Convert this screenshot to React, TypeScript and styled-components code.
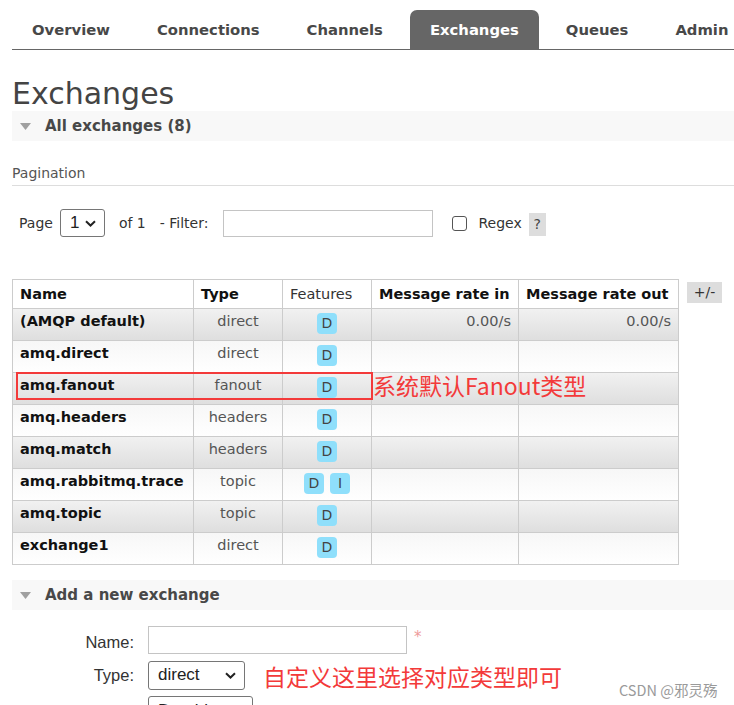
import React from 'react';
import styled, {createGlobalStyle, css} from 'styled-components';

const GlobalStyle = createGlobalStyle`
  body {
    margin: 0;
    background: #fff;
    font-family: "DejaVu Sans", Verdana, sans-serif;
    color: #484848;
  }
`;

const Page = styled.div`
  position: relative;
  width: 734px;
  height: 705px;
  overflow: hidden;
  padding-left: 12px;
  box-sizing: border-box;
`;

const Nav = styled.ul`
  display: flex;
  gap: 7px;
  margin: 10px 0 0;
  padding: 0;
  list-style: none;
  border-bottom: 1px solid #666;
  white-space: nowrap;
`;

const NavItem = styled.li<{ $active?: boolean }>`
  height: 39px;
  line-height: 39px;
  padding: 0 20px;
  font-size: 14.8px;
  font-weight: bold;
  color: #484848;
  border-radius: 7px 7px 0 0;
  ${p => p.$active && css`
    background: #666;
    color: #fff;
  `}
`;

const Title = styled.h1`
  margin: 27px 0 0;
  font-size: 30px;
  line-height: 34px;
  font-weight: normal;
  color: #444;
`;

const SectionHeader = styled.div<{ $top?: number }>`
  display: flex;
  align-items: center;
  gap: 14px;
  height: 30px;
  margin-top: ${p => p.$top ?? 0}px;
  padding-left: 8px;
  background: #f8f8f8;
  font-size: 15px;
  font-weight: bold;
  color: #484848;
`;

const SubTitle = styled.div`
  margin-top: 24px;
  padding-bottom: 3px;
  line-height: 17px;
  font-size: 14px;
  color: #555;
  border-bottom: 1px solid #ddd;
`;

const FilterRow = styled.div`
  display: flex;
  align-items: center;
  height: 28px;
  margin-top: 23px;
  padding-left: 7px;
  font-size: 14px;
  color: #333;
`;

const FakeSelect = styled.div<{ $width: number; $height?: number }>`
  display: flex;
  align-items: center;
  justify-content: space-between;
  box-sizing: border-box;
  width: ${p => p.$width}px;
  height: ${p => p.$height ?? 28}px;
  padding: 0 8px 0 9px;
  border: 1px solid #767676;
  border-radius: 3px;
  background: #fff;
  color: #222;
  font-family: "Liberation Sans", Arial, sans-serif;
  font-size: 17px;
`;

const TextInput = styled.div<{ $width: number; $height: number }>`
  box-sizing: border-box;
  width: ${p => p.$width}px;
  height: ${p => p.$height}px;
  border: 1px solid #c4c4c4;
  background: #fff;
`;

const Spaced = styled.span<{ $left: number }>`
  margin-left: ${p => p.$left}px;
`;

const CheckBox = styled.span`
  display: inline-block;
  box-sizing: border-box;
  width: 15px;
  height: 15px;
  margin-left: 19px;
  border: 1px solid #555;
  border-radius: 3px;
  background: #fff;
`;

const HelpBox = styled.span`
  display: inline-block;
  width: 17px;
  height: 23px;
  line-height: 23px;
  margin-left: 7px;
  margin-top: 3px;
  text-align: center;
  background: #ddd;
  color: #444;
`;

const TableWrap = styled.div`
  display: flex;
  align-items: flex-start;
  margin-top: 42px;
`;

const Table = styled.table`
  border-collapse: collapse;
  table-layout: fixed;
  width: 666px;
  font-size: 14.5px;
`;

const Th = styled.th<{ $plain?: boolean }>`
  height: 28px;
  padding: 0 7px;
  border: 1px solid #ccc;
  text-align: left;
  font-weight: ${p => (p.$plain ? 'normal' : 'bold')};
  color: ${p => (p.$plain ? '#333' : '#111')};
  background: #fff;
  white-space: nowrap;
`;

const Tr = styled.tr<{ $alt: boolean }>`
  background: ${p => (p.$alt
    ? 'linear-gradient(#f1f1f1, #dedede)'
    : 'linear-gradient(#f7f7f7, #ffffff)')};
`;

const Td = styled.td<{ $align?: 'left' | 'center' | 'right'; $bold?: boolean }>`
  height: 32px;
  box-sizing: border-box;
  padding: 1px 7px 0;
  border: 1px solid #ccc;
  line-height: 22px;
  vertical-align: top;
  text-align: ${p => p.$align ?? 'left'};
  font-weight: ${p => (p.$bold ? 'bold' : 'normal')};
  color: ${p => (p.$bold ? '#111' : '#555')};
  white-space: nowrap;
`;

const Badge = styled.span`
  display: inline-block;
  width: 20px;
  height: 21px;
  line-height: 21px;
  margin: 3px 3px 0;
  border-radius: 4px;
  background: #8fdffb;
  color: #444;
  font-size: 14px;
  text-align: center;
  vertical-align: top;
`;

const ToggleBox = styled.span`
  margin: 3px 0 0 8px;
  width: 35px;
  height: 21px;
  line-height: 21px;
  text-align: center;
  background: #ddd;
  color: #333;
  font-size: 14px;
`;

const Form = styled.div`
  display: grid;
  grid-template-columns: 122px auto;
  column-gap: 14px;
  row-gap: 5px;
  margin-top: 16px;
  align-items: start;
`;

const Label = styled.div`
  padding-top: 7px;
  text-align: right;
  font-family: "Liberation Sans", Arial, sans-serif;
  font-size: 16.5px;
  color: #333;
`;

const FieldRow = styled.div`
  display: flex;
  align-items: center;
`;

const Required = styled.span`
  margin: -6px 0 0 7px;
  color: #ee9a9a;
  font-size: 15px;
`;

const Note = styled.span`
  font-family: "Noto Sans CJK SC", sans-serif;
  font-size: 23px;
  line-height: 30px;
  color: #f33a3a;
  white-space: nowrap;
`;

const InlineNote = styled(Note)`
  margin-left: 18px;
  margin-top: 2px;
`;

const OverlayNote = styled(Note)`
  position: absolute;
  left: 373px;
  top: 370px;
`;

const Highlight = styled.div`
  position: absolute;
  left: 16px;
  top: 372px;
  width: 357px;
  height: 28px;
  box-sizing: border-box;
  border: 2px solid #f33a3a;
`;

const Watermark = styled.div`
  position: absolute;
  left: 619px;
  top: 679px;
  font-family: "Noto Sans CJK SC", sans-serif;
  font-size: 14.5px;
  color: #9a9a9a;
`;

const Chevron = () => (
  <svg width="11" height="7" viewBox="0 0 11 7">
    <path d="M1 1.2 L5.5 5.5 L10 1.2" fill="none" stroke="#222" strokeWidth="2" />
  </svg>
);

const Triangle = () => (
  <svg width="11" height="7" viewBox="0 0 11 7">
    <path d="M0 0 H11 L5.5 7 Z" fill="#a0a0a0" />
  </svg>
);

const exchanges = [
  {name: '(AMQP default)', type: 'direct', features: ['D'], rateIn: '0.00/s', rateOut: '0.00/s'},
  {name: 'amq.direct', type: 'direct', features: ['D']},
  {name: 'amq.fanout', type: 'fanout', features: ['D']},
  {name: 'amq.headers', type: 'headers', features: ['D']},
  {name: 'amq.match', type: 'headers', features: ['D']},
  {name: 'amq.rabbitmq.trace', type: 'topic', features: ['D', 'I']},
  {name: 'amq.topic', type: 'topic', features: ['D']},
  {name: 'exchange1', type: 'direct', features: ['D']},
];

const tabs = ['Overview', 'Connections', 'Channels', 'Exchanges', 'Queues', 'Admin'];

const App = () => {
  return (
    <>
      <GlobalStyle />
      <Page>
        <Nav>
          {tabs.map(t => (
            <NavItem key={t} $active={t === 'Exchanges'}>{t}</NavItem>
          ))}
        </Nav>

        <Title>Exchanges</Title>
        <SectionHeader>
          <Triangle />
          All exchanges (8)
        </SectionHeader>

        <SubTitle>Pagination</SubTitle>
        <FilterRow>
          Page
          <Spaced $left={7}>
            <FakeSelect $width={45}>1 <Chevron /></FakeSelect>
          </Spaced>
          <Spaced $left={14}>of 1</Spaced>
          <Spaced $left={14}>- Filter:</Spaced>
          <Spaced $left={15}>
            <TextInput $width={210} $height={27} />
          </Spaced>
          <CheckBox />
          <Spaced $left={11}>Regex</Spaced>
          <HelpBox>?</HelpBox>
        </FilterRow>

        <TableWrap>
          <Table>
            <colgroup>
              <col style={{width: 181}} />
              <col style={{width: 89}} />
              <col style={{width: 89}} />
              <col style={{width: 147}} />
              <col style={{width: 160}} />
            </colgroup>
            <thead>
              <tr>
                <Th>Name</Th>
                <Th>Type</Th>
                <Th $plain>Features</Th>
                <Th>Message rate in</Th>
                <Th>Message rate out</Th>
              </tr>
            </thead>
            <tbody>
              {exchanges.map((x, i) => (
                <Tr key={x.name} $alt={i % 2 === 0}>
                  <Td $bold>{x.name}</Td>
                  <Td $align="center">{x.type}</Td>
                  <Td $align="center">
                    {x.features.map(f => <Badge key={f}>{f}</Badge>)}
                  </Td>
                  <Td $align="right">{x.rateIn}</Td>
                  <Td $align="right">{x.rateOut}</Td>
                </Tr>
              ))}
            </tbody>
          </Table>
          <ToggleBox>+/-</ToggleBox>
        </TableWrap>

        <SectionHeader $top={15}>
          <Triangle />
          Add a new exchange
        </SectionHeader>

        <Form>
          <Label>Name:</Label>
          <FieldRow>
            <TextInput $width={259} $height={28} />
            <Required>*</Required>
          </FieldRow>
          <Label>Type:</Label>
          <FieldRow>
            <FakeSelect $width={97} $height={29}>direct <Chevron /></FakeSelect>
            <InlineNote>自定义这里选择对应类型即可</InlineNote>
          </FieldRow>
          <Label />
          <FieldRow>
            <FakeSelect $width={105} $height={29}>Durable</FakeSelect>
          </FieldRow>
        </Form>

        <Highlight />
        <OverlayNote>系统默认Fanout类型</OverlayNote>
        <Watermark>CSDN @邪灵殇</Watermark>
      </Page>
    </>
  );
};

export default App;
